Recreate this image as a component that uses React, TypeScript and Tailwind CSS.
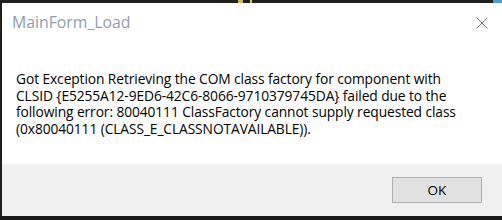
export default function App() {
  const lines = [
    "Got Exception Retrieving the COM class factory for component with",
    "CLSID {E5255A12-9ED6-42C6-8066-9710379745DA} failed due to the",
    "following error: 80040111 ClassFactory cannot supply requested class",
    "(0x80040111 (CLASS_E_CLASSNOTAVAILABLE)).",
  ];

  return (
    <div
      className="flex h-[220px] w-[502px] flex-col overflow-hidden bg-[#1b1b1b]"
      style={{ fontFamily: '"Open Sans", "Noto Sans", sans-serif' }}
    >
      {/* strip of the window behind */}
      <div className="relative h-[3px] shrink-0 bg-[#1f1f1f]">
        <div className="absolute left-[238px] top-0 h-[3px] w-[5px] bg-[#c8b46a]" />
        <div className="absolute left-[250px] top-0 h-[3px] w-[2px] bg-[#d9c27a]" />
        <div className="absolute left-[493px] top-0 h-[3px] w-[9px] bg-[#4b9ad6]" />
      </div>

      <div className="flex min-h-0 flex-1">
        <div className="w-[2px] shrink-0 bg-[#1f1f1f]" />
        <div className="flex flex-1 flex-col">
          {/* body */}
          <div className="flex h-[161px] flex-col bg-white">
            <div className="flex items-start justify-between pl-[10px] pr-[14px] pt-[9px]">
              <div className="text-[15.8px] leading-[20px] text-[#8e9cb0]">MainForm_Load</div>
              <svg width="12" height="12" viewBox="0 0 12 12" className="mt-[5px]">
                <path d="M0.5 0.5 L11.5 11.5 M11.5 0.5 L0.5 11.5" stroke="#7a7a7a" strokeWidth="1" />
              </svg>
            </div>
            <div className="pl-[14px] pt-[39px] text-[13.8px] leading-[16.7px] tracking-[-0.1px] text-black">
              {lines.map((l) => (
                <div key={l} className="whitespace-nowrap">
                  {l}
                </div>
              ))}
            </div>
          </div>

          {/* footer */}
          <div className="flex h-[52px] items-center justify-end bg-[#f0f0f0] pr-[20px]">
            <button className="h-[26px] w-[90px] border border-[#adadad] bg-[#e1e1e1] text-[13.5px] text-black">
              OK
            </button>
          </div>
        </div>
      </div>

      <div className="h-[4px] shrink-0 bg-[#1a1a1a]" />
    </div>
  );
}
